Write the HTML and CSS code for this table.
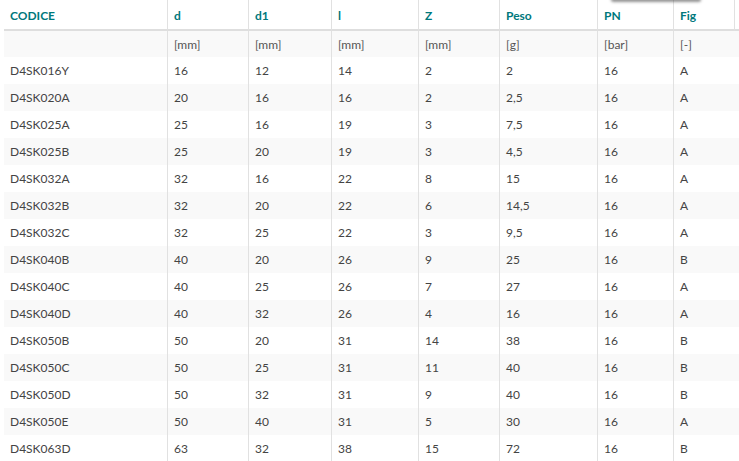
FILE: index.html
```html
<!DOCTYPE html>
<html lang="it">
<head>
<meta charset="utf-8">
<link rel="stylesheet" href="styles.css">
<title>Tabella</title>
</head>
<body>
<div class="wrap">
<div class="shadow"></div>
<table class="tbl">
<colgroup>
<col class="c1"><col class="c2"><col class="c3"><col class="c4"><col class="c5"><col class="c6"><col class="c7"><col class="c8"><col class="c9">
</colgroup>
<thead>
<tr class="head"><th>CODICE</th><th>d</th><th>d1</th><th>l</th><th>Z</th><th>Peso</th><th>PN</th><th>Fig</th><th class="edge"></th></tr>
</thead>
<tbody>
<tr class="units"><td></td><td>[mm]</td><td>[mm]</td><td>[mm]</td><td>[mm]</td><td>[g]</td><td>[bar]</td><td>[-]</td><td class="edge"></td></tr>
<tr><td>D4SK016Y</td><td>16</td><td>12</td><td>14</td><td>2</td><td>2</td><td>16</td><td>A</td><td class="edge"></td></tr>
<tr><td>D4SK020A</td><td>20</td><td>16</td><td>16</td><td>2</td><td>2,5</td><td>16</td><td>A</td><td class="edge"></td></tr>
<tr><td>D4SK025A</td><td>25</td><td>16</td><td>19</td><td>3</td><td>7,5</td><td>16</td><td>A</td><td class="edge"></td></tr>
<tr><td>D4SK025B</td><td>25</td><td>20</td><td>19</td><td>3</td><td>4,5</td><td>16</td><td>A</td><td class="edge"></td></tr>
<tr><td>D4SK032A</td><td>32</td><td>16</td><td>22</td><td>8</td><td>15</td><td>16</td><td>A</td><td class="edge"></td></tr>
<tr><td>D4SK032B</td><td>32</td><td>20</td><td>22</td><td>6</td><td>14,5</td><td>16</td><td>A</td><td class="edge"></td></tr>
<tr><td>D4SK032C</td><td>32</td><td>25</td><td>22</td><td>3</td><td>9,5</td><td>16</td><td>A</td><td class="edge"></td></tr>
<tr><td>D4SK040B</td><td>40</td><td>20</td><td>26</td><td>9</td><td>25</td><td>16</td><td>B</td><td class="edge"></td></tr>
<tr><td>D4SK040C</td><td>40</td><td>25</td><td>26</td><td>7</td><td>27</td><td>16</td><td>A</td><td class="edge"></td></tr>
<tr><td>D4SK040D</td><td>40</td><td>32</td><td>26</td><td>4</td><td>16</td><td>16</td><td>A</td><td class="edge"></td></tr>
<tr><td>D4SK050B</td><td>50</td><td>20</td><td>31</td><td>14</td><td>38</td><td>16</td><td>B</td><td class="edge"></td></tr>
<tr><td>D4SK050C</td><td>50</td><td>25</td><td>31</td><td>11</td><td>40</td><td>16</td><td>B</td><td class="edge"></td></tr>
<tr><td>D4SK050D</td><td>50</td><td>32</td><td>31</td><td>9</td><td>40</td><td>16</td><td>B</td><td class="edge"></td></tr>
<tr><td>D4SK050E</td><td>50</td><td>40</td><td>31</td><td>5</td><td>30</td><td>16</td><td>A</td><td class="edge"></td></tr>
<tr><td>D4SK063D</td><td>63</td><td>32</td><td>38</td><td>15</td><td>72</td><td>16</td><td>B</td><td class="edge"></td></tr>
</tbody>
</table>
</div>
</body>
</html>
```
FILE: styles.css
```css
html, body {
  margin: 0;
  padding: 0;
  background: #fff;
  overflow: hidden;
}
body {
  font-family: Lato, "Open Sans", sans-serif;
  font-size: 12px;
  color: #444;
}
.wrap {
  position: relative;
  padding-left: 4px;
}
.shadow {
  position: absolute;
  top: -3px;
  left: 612px;
  width: 88px;
  height: 3px;
  border-radius: 2px;
  box-shadow: 0 1px 3px 1px rgba(60, 60, 60, 0.55);
}
.tbl {
  border-collapse: separate;
  border-spacing: 0;
  table-layout: fixed;
  width: 735px;
}
.c1 { width: 163px; }
.c2 { width: 81px; }
.c3 { width: 83px; }
.c4 { width: 87px; }
.c5 { width: 81px; }
.c6 { width: 98px; }
.c7 { width: 76px; }
.c8 { width: 61px; }
.c9 { width: 5px; }
.tbl th, .tbl td {
  text-align: left;
  padding: 0 0 0 6px;
  white-space: nowrap;
  overflow: hidden;
}
.tbl th + th, .tbl td + td {
  border-left: 1px solid #e1e1e1;
}
.tbl td.edge {
  border-left: none;
  padding: 0;
}
.tbl th.edge {
  padding: 0;
}
.head th {
  height: 27px;
  padding-top: 2px;
  font-weight: 700;
  color: #00787c;
  border-bottom: 2px solid #dedede;
  background-clip: padding-box;
  background: #fff;
  vertical-align: middle;
}
.head th + th {
  border-left: 1px solid #e1e1e1;
  box-shadow: inset 0 2px 0 #fff;
}
.units td {
  height: 26px;
  color: #555;
}
.tbl tbody tr td {
  height: 27px;
  vertical-align: middle;
}
.tbl tbody tr.units td {
  height: 26px;
}
.tbl tbody tr:nth-child(odd) td {
  background: #f9f9f9;
}
```
